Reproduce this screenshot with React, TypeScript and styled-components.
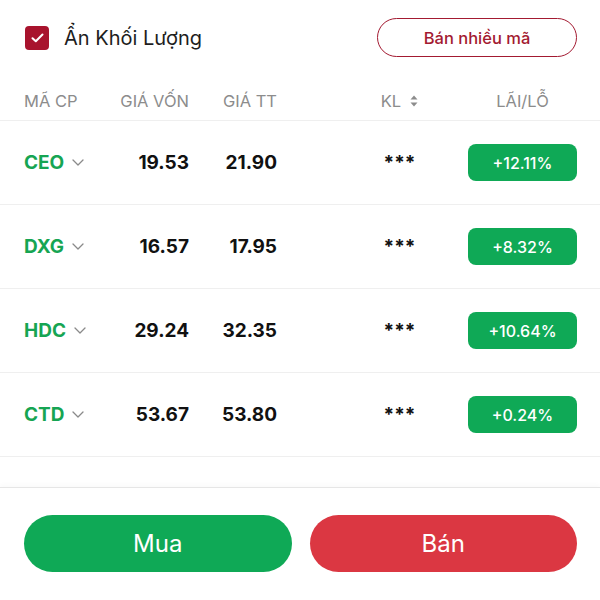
import React from 'react';
import styled, { createGlobalStyle } from 'styled-components';

const GlobalStyle = createGlobalStyle`
  *, *::before, *::after {
    box-sizing: border-box;
  }
  body {
    margin: 0;
    background: #fff;
    font-family: Inter, "Noto Sans", sans-serif;
  }
`;

const holdings = [
  { code: 'CEO', cost: '19.53', price: '21.90', pnl: '+12.11%' },
  { code: 'DXG', cost: '16.57', price: '17.95', pnl: '+8.32%' },
  { code: 'HDC', cost: '29.24', price: '32.35', pnl: '+10.64%' },
  { code: 'CTD', cost: '53.67', price: '53.80', pnl: '+0.24%' },
];

const Page = styled.div`
  width: 600px;
  height: 600px;
  display: flex;
  flex-direction: column;
  overflow: hidden;
`;

const TopBar = styled.div`
  display: flex;
  align-items: center;
  justify-content: space-between;
  margin-top: 18px;
  padding: 0 23px 0 25px;
  height: 39px;
`;

const CheckLabel = styled.label`
  display: flex;
  align-items: center;
  gap: 15px;
  font-size: 20px;
  color: #1e1e1e;
`;

const Box = styled.span`
  width: 24px;
  height: 24px;
  border-radius: 4px;
  background: #a8132d;
  display: flex;
  align-items: center;
  justify-content: center;
`;

const OutlineButton = styled.button`
  width: 200px;
  height: 39px;
  border: 1.5px solid #a31a31;
  border-radius: 20px;
  background: #fff;
  color: #a31a31;
  font-family: inherit;
  font-size: 16.5px;
  font-weight: 500;
`;

const Row = styled.div<{ $head?: boolean }>`
  display: grid;
  grid-template-columns: 96px 69px 88px 1fr 109px;
  align-items: center;
  height: ${(p) => (p.$head ? '40px' : '84px')};
  margin-top: ${(p) => (p.$head ? '24px' : '0')};
  padding: 0 23px 0 24px;
  border-bottom: 1px solid #efefef;
  color: ${(p) => (p.$head ? '#8c8c8c' : '#111')};
  font-size: ${(p) => (p.$head ? '16.5px' : '19px')};
  font-weight: ${(p) => (p.$head ? 400 : 700)};
`;

const Code = styled.div`
  display: flex;
  align-items: center;
  gap: 8px;
  color: #16a553;
  font-size: 19px;
  font-weight: 700;
`;

const Num = styled.div`
  text-align: right;
`;

const Center = styled.div<{ $shift?: boolean }>`
  display: flex;
  align-items: center;
  justify-content: center;
  gap: 9px;
  padding-left: ${(p) => (p.$shift ? '54px' : '0')};
`;

const Badge = styled.div`
  height: 37px;
  border-radius: 8px;
  background: #0fa956;
  color: #fff;
  font-size: 16px;
  font-weight: 500;
  display: flex;
  align-items: center;
  justify-content: center;
`;

const Footer = styled.div`
  margin-top: 30px;
  border-top: 1px solid #e6e6e6;
  box-shadow: 0 -3px 4px rgba(0, 0, 0, 0.02);
  display: flex;
  gap: 18px;
  padding: 27px 23px 0 24px;
`;

const ActionButton = styled.button<{ $sell?: boolean }>`
  flex: 1;
  height: 57px;
  border: none;
  border-radius: 29px;
  background: ${(p) => (p.$sell ? '#db3742' : '#0fa956')};
  color: #fff;
  font-family: inherit;
  font-size: 24px;
  font-weight: 400;
`;

const Chevron = () => (
  <svg width="12" height="7" viewBox="0 0 12 7" fill="none">
    <path d="M1 1l5 5 5-5" stroke="#8a8a8a" strokeWidth="1.3" strokeLinecap="round" strokeLinejoin="round" />
  </svg>
);

const SortIcon = () => (
  <svg width="8" height="12" viewBox="0 0 8 12">
    <path d="M4 0.5L7.5 4.5H0.5z" fill="#8c8c8c" />
    <path d="M4 11.5L7.5 7.5H0.5z" fill="#8c8c8c" />
  </svg>
);

export default function App() {
  return (
    <Page>
      <GlobalStyle />
      <TopBar>
        <CheckLabel>
          <Box>
            <svg width="13" height="10" viewBox="0 0 13 10" fill="none">
              <path d="M1.5 5.2l3.3 3.1 6.7-6.8" stroke="#fff" strokeWidth="2" strokeLinecap="round" strokeLinejoin="round" />
            </svg>
          </Box>
          Ẩn Khối Lượng
        </CheckLabel>
        <OutlineButton>Bán nhiều mã</OutlineButton>
      </TopBar>
      <Row $head>
        <div>MÃ CP</div>
        <Num>GIÁ VỐN</Num>
        <Num>GIÁ TT</Num>
        <Center $shift>
          KL <SortIcon />
        </Center>
        <Center>LÃI/LỖ</Center>
      </Row>
      {holdings.map((h) => (
        <Row key={h.code}>
          <Code>
            {h.code}
            <Chevron />
          </Code>
          <Num>{h.cost}</Num>
          <Num>{h.price}</Num>
          <Center $shift>***</Center>
          <Badge>{h.pnl}</Badge>
        </Row>
      ))}
      <Footer>
        <ActionButton>Mua</ActionButton>
        <ActionButton $sell>Bán</ActionButton>
      </Footer>
    </Page>
  );
}
